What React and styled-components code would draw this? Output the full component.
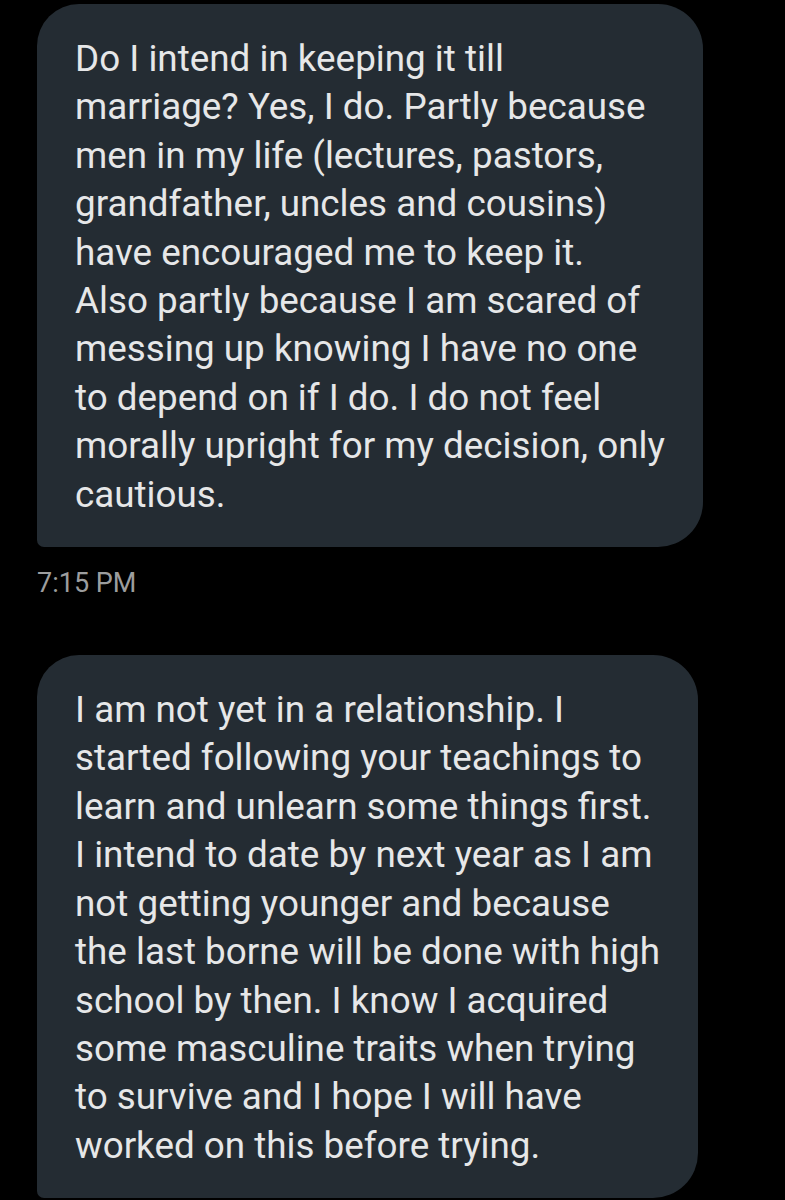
import React from "react";
import styled, { createGlobalStyle } from "styled-components";

const GlobalStyle = createGlobalStyle`
  html, body {
    margin: 0;
    padding: 0;
    background: #000;
  }
`;

const Thread = styled.div`
  width: 785px;
  height: 1200px;
  overflow: hidden;
  background: #000;
  display: flex;
  flex-direction: column;
  align-items: flex-start;
  padding: 4px 0 0 37px;
  box-sizing: border-box;
  font-family: Roboto, "Noto Sans", sans-serif;
`;

const Bubble = styled.div`
  background: #242c33;
  color: #e6e7e8;
  font-size: 36.8px;
  line-height: 48.4px;
  padding: 31px 38px 28px 38px;
  border-radius: 42px 45px 45px 7px;
  margin-top: ${(p) => p.$gap || 0}px;
`;

const Line = styled.div`
  white-space: nowrap;
`;

const Stamp = styled.div`
  color: #9c9d9e;
  font-size: 27px;
  margin-top: 20px;
`;

const first = [
  "Do I intend in keeping it till",
  "marriage? Yes, I do. Partly because",
  "men in my life (lectures, pastors,",
  "grandfather, uncles and cousins)",
  "have encouraged me to keep it.",
  "Also partly because I am scared of",
  "messing up knowing I have no one",
  "to depend on if I do. I do not feel",
  "morally upright for my decision, only",
  "cautious.",
];

const second = [
  "I am not yet in a relationship. I",
  "started following your teachings to",
  "learn and unlearn some things first.",
  "I intend to date by next year as I am",
  "not getting younger and because",
  "the last borne will be done with high",
  "school by then. I know I acquired",
  "some masculine traits when trying",
  "to survive and I hope I will have",
  "worked on this before trying.",
];

const App = () => {
  return (
    <>
      <GlobalStyle />
      <Thread>
        <Bubble>
          {first.map((l, i) => (
            <Line key={i}>{l}</Line>
          ))}
        </Bubble>
        <Stamp>7:15 PM</Stamp>
        <Bubble $gap={56}>
          {second.map((l, i) => (
            <Line key={i}>{l}</Line>
          ))}
        </Bubble>
      </Thread>
    </>
  );
};

export default App;
